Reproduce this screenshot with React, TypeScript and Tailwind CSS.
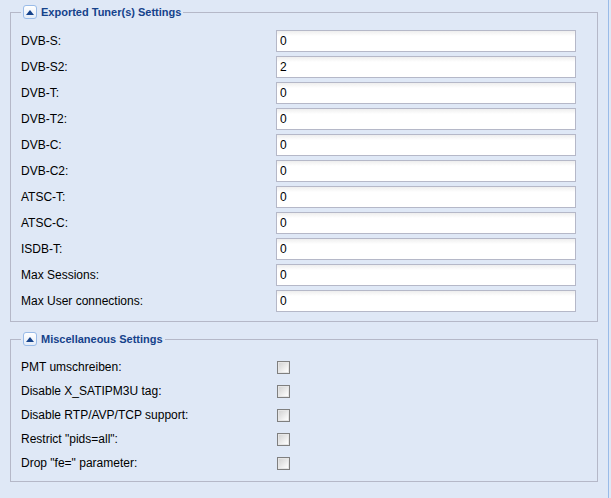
import React from "react";

const tuners: [string, string][] = [
  ["DVB-S:", "0"],
  ["DVB-S2:", "2"],
  ["DVB-T:", "0"],
  ["DVB-T2:", "0"],
  ["DVB-C:", "0"],
  ["DVB-C2:", "0"],
  ["ATSC-T:", "0"],
  ["ATSC-C:", "0"],
  ["ISDB-T:", "0"],
  ["Max Sessions:", "0"],
  ["Max User connections:", "0"],
];

const misc = [
  "PMT umschreiben:",
  "Disable X_SATIPM3U tag:",
  "Disable RTP/AVP/TCP support:",
  'Restrict "pids=all":',
  'Drop "fe=" parameter:',
];

function Toggle() {
  return (
    <span className="flex h-[14px] w-[14px] items-center justify-center rounded-[3px] border border-[#99bbe8] bg-gradient-to-b from-white to-[#e4ecf8]">
      <svg width="8" height="5" viewBox="0 0 8 5">
        <polygon points="0,5 8,5 4,0" fill="#15428b" />
      </svg>
    </span>
  );
}

function Legend({ title }: { title: string }) {
  return (
    <legend className="flex h-[16px] items-center gap-[4px] px-[2px]">
      <Toggle />
      <span className="text-[11px] font-bold text-[#15428b]">{title}</span>
    </legend>
  );
}

export default function App() {
  return (
    <div
      className="h-[498px] w-[611px] bg-[#dfe8f6] text-black"
      style={{ fontFamily: '"Liberation Sans", Arial, sans-serif' }}
    >
      <div className="h-[498px] w-[609px] border-r border-[#99bbe8] pt-[4px]">
        <fieldset className="ml-[10px] w-[588px] border border-[#b5b8c8] px-[10px] pb-[9px] pt-[10px]">
          <Legend title="Exported Tuner(s) Settings" />
          <div className="flex flex-col gap-[4px]">
            {tuners.map(([label, value]) => (
              <div key={label} className="flex h-[22px] items-center">
                <span className="w-[255px] text-[12px]">{label}</span>
                <input
                  readOnly
                  value={value}
                  className="h-[22px] w-[300px] border border-[#b5b8c8] bg-white bg-gradient-to-b from-[#eeeeee] via-white via-[25%] to-white px-[3px] text-[12px] text-black outline-none"
                />
              </div>
            ))}
          </div>
        </fieldset>
        <fieldset className="ml-[10px] mt-[9px] w-[588px] border border-[#b5b8c8] px-[10px] pb-[6px] pt-[8px]">
          <Legend title="Miscellaneous Settings" />
          <div className="flex flex-col">
            {misc.map((label) => (
              <div key={label} className="flex h-[24px] items-center">
                <span className="w-[256px] text-[12px]">{label}</span>
                <span className="flex h-[13px] w-[13px] items-center justify-center border border-[#7f7f7f] bg-[#f4f4f4]">
                  <span className="h-[11px] w-[11px] border border-[#e6e6e6] bg-gradient-to-br from-[#d4d4d4] to-white" />
                </span>
              </div>
            ))}
          </div>
        </fieldset>
      </div>
    </div>
  );
}
